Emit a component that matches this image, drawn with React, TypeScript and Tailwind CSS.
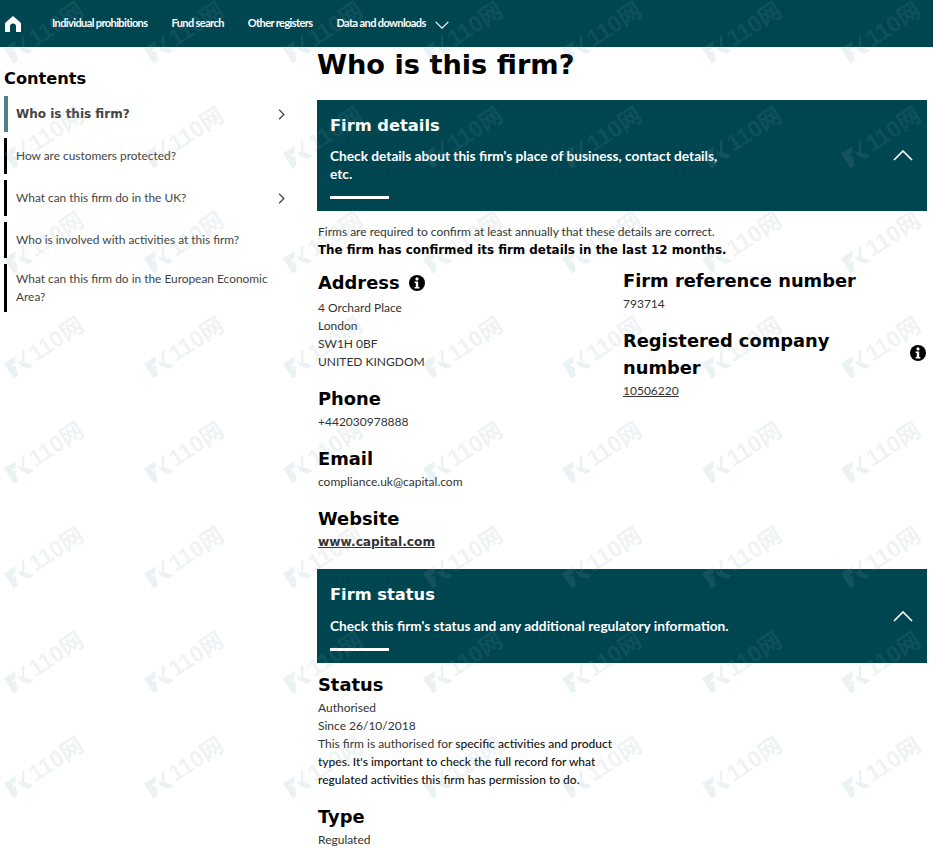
import type { ReactNode } from "react";

const teal = "bg-[#004650]";

function Watermark() {
  const cells: { x: number; y: number }[] = [];
  for (let r = 0; r < 8; r++) {
    for (let c = 0; c < 7; c++) {
      cells.push({ x: 45 + c * 139.5, y: 32 + r * 105 });
    }
  }
  return (
    <div className="pointer-events-none absolute inset-0 overflow-hidden">
      {cells.map((p, i) => (
        <div
          key={i}
          className="absolute flex items-center gap-[2px] whitespace-nowrap text-[23px] leading-none font-bold text-[#7f9fae]/15"
          style={{ left: p.x, top: p.y, transform: "translate(-50%, -50%) rotate(-33deg)" }}
        >
          <svg width="25" height="19" viewBox="0 0 25 19" className="shrink-0 fill-[#7f9fae]/15">
            <path d="M0 1h14l-4 6H6v2h3l-4 10H0zM13 6l3 4 6-10h3l-7 11 6 8h-6l-5-7z" />
          </svg>
          <span className="[font-family:'Liberation_Sans','Noto_Sans_CJK_SC',sans-serif]">110网</span>
        </div>
      ))}
    </div>
  );
}

function Chevron({ dir, className }: { dir: "right" | "up" | "down"; className: string }) {
  const d = dir === "right" ? "M4 1l6 6-6 6" : dir === "up" ? "M1 10l9-9 9 9" : "M1 1l9 9 9-9";
  const vb = dir === "right" ? "0 0 14 14" : "0 0 20 11";
  return (
    <svg viewBox={vb} fill="none" stroke="currentColor" strokeWidth={dir === "right" ? 1.6 : 1.7} className={className}>
      <path d={d} />
    </svg>
  );
}

function Info({ className }: { className: string }) {
  return (
    <svg viewBox="0 0 16 16" className={className}>
      <circle cx="8" cy="8" r="8" fill="#000" />
      <circle cx="8" cy="3.9" r="1.6" fill="#fff" />
      <path d="M5.6 6.4h3.6v5.6h1.2v1.6H5.6V12h1.2V8H5.6z" fill="#fff" />
    </svg>
  );
}

function NavLink({ children }: { children: string }) {
  return <span className="text-[11px] font-bold tracking-[-0.6px] text-white">{children}</span>;
}

function SideItem({ label, chevron, active, tall }: { label: string; chevron?: boolean; active?: boolean; tall?: boolean }) {
  return (
    <div
      className={`flex w-[283px] items-center justify-between ${
        active ? "border-l-[4px] border-[#4f8288] pl-[8px]" : "border-l-[3px] border-black pl-[9px]"
      } ${tall ? "h-12" : "h-9"}`}
    >
      <span
        className={
          active
            ? "text-[12px] font-bold text-[#444] [font-family:'DejaVu_Sans',sans-serif]"
            : "w-[256px] text-[11.9px] leading-[18px] text-[#444]"
        }
      >
        {label}
      </span>
      {chevron && <Chevron dir="right" className="h-[11px] w-[11px] text-[#444]" />}
    </div>
  );
}

function Heading({ children }: { children: ReactNode }) {
  return <h3 className="text-[17.85px] leading-[27px] font-bold text-black [font-family:'DejaVu_Sans',sans-serif]">{children}</h3>;
}

function Body({ children }: { children: ReactNode }) {
  return <div className="mt-px text-xs leading-[18px] text-[#333]">{children}</div>;
}

export default function App() {
  return (
    <div className="relative h-[848px] w-[933px] overflow-hidden bg-white [font-family:Lato,sans-serif]">
      <header className={`flex h-[47px] items-center ${teal} pl-[5px]`}>
        <svg viewBox="0 0 16 16" className="h-4 w-4 fill-white">
          <path d="M8 0L0 7v9h5v-5.5a3 3 0 0 1 6 0V16h5V7z" />
        </svg>
        <div className="ml-[31px] flex items-center">
          <div className="flex gap-6">
            <NavLink>Individual prohibitions</NavLink>
            <NavLink>Fund search</NavLink>
            <NavLink>Other registers</NavLink>
            <NavLink>Data and downloads</NavLink>
          </div>
          <Chevron dir="down" className="mt-[2px] ml-[9px] h-[8px] w-[14px] text-white" />
        </div>
      </header>

      <div className="flex">
        <aside className="w-[317px] pt-[22px] pl-1">
          <h2 className="text-[16.2px] leading-5 font-bold text-black [font-family:'DejaVu_Sans',sans-serif]">Contents</h2>
          <nav className="mt-[7px] flex flex-col gap-1.5">
            <SideItem label="Who is this firm?" chevron active />
            <SideItem label="How are customers protected?" />
            <SideItem label="What can this firm do in the UK?" chevron />
            <SideItem label="Who is involved with activities at this firm?" />
            <SideItem label="What can this firm do in the European Economic Area?" tall />
          </nav>
        </aside>

        <main className="w-[610px]">
          <h1 className="pt-px text-[27.2px] leading-[34px] font-bold text-black [font-family:'DejaVu_Sans',sans-serif]">Who is this firm?</h1>

          <div className={`relative mt-[18px] h-[111px] ${teal} px-[13px] pt-[13px] text-white`}>
            <h2 className="text-[16.3px] leading-[26px] font-bold [font-family:'DejaVu_Sans',sans-serif]">Firm details</h2>
            <p className="mt-[8px] w-[400px] text-[13.7px] leading-[18px] font-bold">
              Check details about this firm's place of business, contact details, etc.
            </p>
            <div className="mt-[13px] h-[3px] w-[59px] bg-white" />
            <Chevron dir="up" className="absolute top-[50px] right-[14px] h-[11px] w-[20px] text-white" />
          </div>

          <div className="pl-px">
            <p className="mt-[12px] text-xs leading-[18px] text-[#333]">
              Firms are required to confirm at least annually that these details are correct.
            </p>
            <p className="text-[11.9px] leading-[18px] font-bold text-black [font-family:'DejaVu_Sans',sans-serif]">
              The firm has confirmed its firm details in the last 12 months.
            </p>

            <div className="mt-[10px] flex">
              <div className="w-[305px]">
                <Heading>
                  <span className="inline-flex items-center gap-[9px]">
                    Address <Info className="h-4 w-4" />
                  </span>
                </Heading>
                <Body>
                  <div className="mt-[3px]">
                    4 Orchard Place
                    <br />
                    London
                    <br />
                    SW1H 0BF
                    <br />
                    UNITED KINGDOM
                  </div>
                </Body>
                <div className="mt-[14px]">
                  <Heading>Phone</Heading>
                  <Body>+442030978888</Body>
                </div>
                <div className="mt-[14px]">
                  <Heading>Email</Heading>
                  <Body>compliance.uk@capital.com</Body>
                </div>
                <div className="mt-[14px]">
                  <Heading>Website</Heading>
                  <div className="mt-px text-[12.2px] leading-[18px] font-bold text-[#333] underline [font-family:'DejaVu_Sans',sans-serif]">
                    www.capital.com
                  </div>
                </div>
              </div>
              <div className="relative -mt-[2px] w-[304px]">
                <Heading>Firm reference number</Heading>
                <div className="mt-[1px] text-xs leading-[18px] text-[#333]">793714</div>
                <div className="mt-[14px]">
                  <Heading>
                    Registered company
                    <br />
                    number
                  </Heading>
                  <Info className="absolute top-[78px] right-px h-4 w-4" />
                  <div className="mt-px text-xs leading-[18px] text-[#333] underline">10506220</div>
                </div>
              </div>
            </div>
          </div>

          <div className={`relative mt-[18px] h-[94px] ${teal} px-[13px] pt-[13px] text-white`}>
            <h2 className="text-[16.3px] leading-[26px] font-bold [font-family:'DejaVu_Sans',sans-serif]">Firm status</h2>
            <p className="mt-[9px] text-[13.7px] leading-[18px] font-bold">
              Check this firm's status and any additional regulatory information.
            </p>
            <div className="mt-[13px] h-[3px] w-[59px] bg-white" />
            <Chevron dir="up" className="absolute top-[42px] right-[14px] h-[11px] w-[20px] text-white" />
          </div>

          <div className="pt-[8px] pl-px">
            <Heading>Status</Heading>
            <Body>
              <div>Authorised</div>
              <div>Since 26/10/2018</div>
              <div>
                This firm is authorised for <span className="font-medium text-[#111]">specific activities and product</span>
              </div>
              <div className="font-medium text-[#111]">types. It's important to check the full record for what</div>
              <div className="font-medium text-[#111]">regulated activities this firm has permission to do.</div>
            </Body>
            <div className="mt-[14px]">
              <Heading>Type</Heading>
              <Body>Regulated</Body>
            </div>
          </div>
        </main>
      </div>
      <Watermark />
    </div>
  );
}
